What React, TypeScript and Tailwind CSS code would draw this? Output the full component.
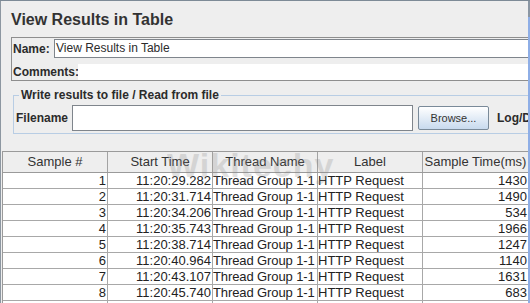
const rows = [
  { n: 1, start: "11:20:29.282", ms: 1430 },
  { n: 2, start: "11:20:31.714", ms: 1490 },
  { n: 3, start: "11:20:34.206", ms: 534 },
  { n: 4, start: "11:20:35.743", ms: 1966 },
  { n: 5, start: "11:20:38.714", ms: 1247 },
  { n: 6, start: "11:20:40.964", ms: 1140 },
  { n: 7, start: "11:20:43.107", ms: 1631 },
  { n: 8, start: "11:20:45.740", ms: 683 },
];

const headers = ["Sample #", "Start Time", "Thread Name", "Label", "Sample Time(ms)"];
const colW = ["w-[105px]", "w-[105px]", "w-[105px]", "w-[105px]", "w-[106px]"];

const App: React.FC = () => {
  return (
    <div className="w-[530px] h-[303px] overflow-hidden bg-[#eeeeee] border-t border-[#7d8a96] flex font-['Liberation_Sans',Arial,sans-serif] text-[#2b2b2b]">
      <div className="relative flex-1 min-w-0 overflow-hidden border-l border-[#8d97a1]">
        <div className="pt-[9px] pl-[10px] h-[29px]">
          <h1 className="text-[16px] leading-[20px] font-bold text-[#333]">View Results in Table</h1>
        </div>

        <div className="mt-[7px] ml-[10px] w-[600px] border border-[#8e8e8e] pt-[1px]">
          <div className="flex items-center h-[19px]">
            <span className="pl-[1px] w-[42px] text-[12px] font-bold">Name:</span>
            <div className="flex-1 h-[19px] border border-[#7f858c] bg-white text-[12px] leading-[17px] pl-[1px]">
              View Results in Table
            </div>
          </div>
          <div className="flex items-end mt-[6px] h-[16px]">
            <span className="pl-[1px] w-[66px] text-[12px] leading-[16px] font-bold">Comments:</span>
            <div className="flex-1 h-[16px] bg-white"></div>
          </div>
        </div>

        <fieldset className="mt-[7px] ml-[12px] w-[515px] border border-[#b8cde4] px-[2px] pb-[2px]">
          <legend className="ml-[3px] px-[2px] text-[12px] leading-[15px] font-bold">
            Write results to file / Read from file
          </legend>
          <div className="flex items-center mt-[2px] h-[26px] whitespace-nowrap">
            <span className="w-[56px] text-[12px] font-bold">Filename</span>
            <div className="w-[341px] h-[26px] border border-[#7f858c] bg-white"></div>
            <button className="ml-[5px] w-[71px] h-[24px] border border-[#7a8a99] rounded-[2px] bg-gradient-to-b from-white to-[#c8daee] text-[11px] text-[#333]">
              Browse...
            </button>
            <span className="ml-[8px] text-[12px] font-bold">Log/D</span>
          </div>
        </fieldset>

        <div className="mt-[17px] ml-[1px] border-t border-l border-[#9a9a9a] w-[600px]">
          <div className="flex h-[21px] bg-[#eeeeee] border-b border-[#9a9a9a]">
            {headers.map((h, i) => (
              <div
                key={h}
                className={`${colW[i]} shrink-0 border-r border-[#a3a3a3] text-center text-[13px] leading-[20px] text-[#333]`}
              >
                {h}
              </div>
            ))}
          </div>
          {rows.map((r) => (
            <div key={r.n} className="flex h-[16px] bg-white border-b border-[#a8a8a8] text-[13px] leading-[16px] text-[#222]">
              <div className={`${colW[0]} shrink-0 border-r border-[#a8a8a8] text-right pr-[1px]`}>{r.n}</div>
              <div className={`${colW[1]} shrink-0 border-r border-[#a8a8a8] text-right pr-[1px]`}>{r.start}</div>
              <div className={`${colW[2]} shrink-0 border-r border-[#a8a8a8] whitespace-nowrap overflow-hidden tracking-[-0.1px]`}>Thread Group 1-1</div>
              <div className={`${colW[3]} shrink-0 border-r border-[#a8a8a8] whitespace-nowrap overflow-hidden`}>HTTP Request</div>
              <div className={`${colW[4]} shrink-0 border-r border-[#a8a8a8] text-right pr-[1px]`}>{r.ms}</div>
            </div>
          ))}
          <div className="flex h-[16px] bg-white">
            {colW.map((w) => (
              <div key={w + "x"} className={`${w} shrink-0 border-r border-[#a8a8a8]`}></div>
            ))}
          </div>
        </div>

        <div className="absolute left-[166px] top-[139px] pointer-events-none select-none text-[#8a8a8a] opacity-25">
          <span className="text-[34px] font-bold tracking-[1px]">Wikitechy</span>
          <span className="absolute left-[66px] top-[34px] text-[9px]">.com</span>
        </div>
      </div>
      <div className="w-[2px] flex flex-col">
        <div className="h-[16px] bg-[#8a96a3]"></div>
        <div className="flex-1 bg-[#8eaee6]"></div>
      </div>
    </div>
  );
};

export default App;
